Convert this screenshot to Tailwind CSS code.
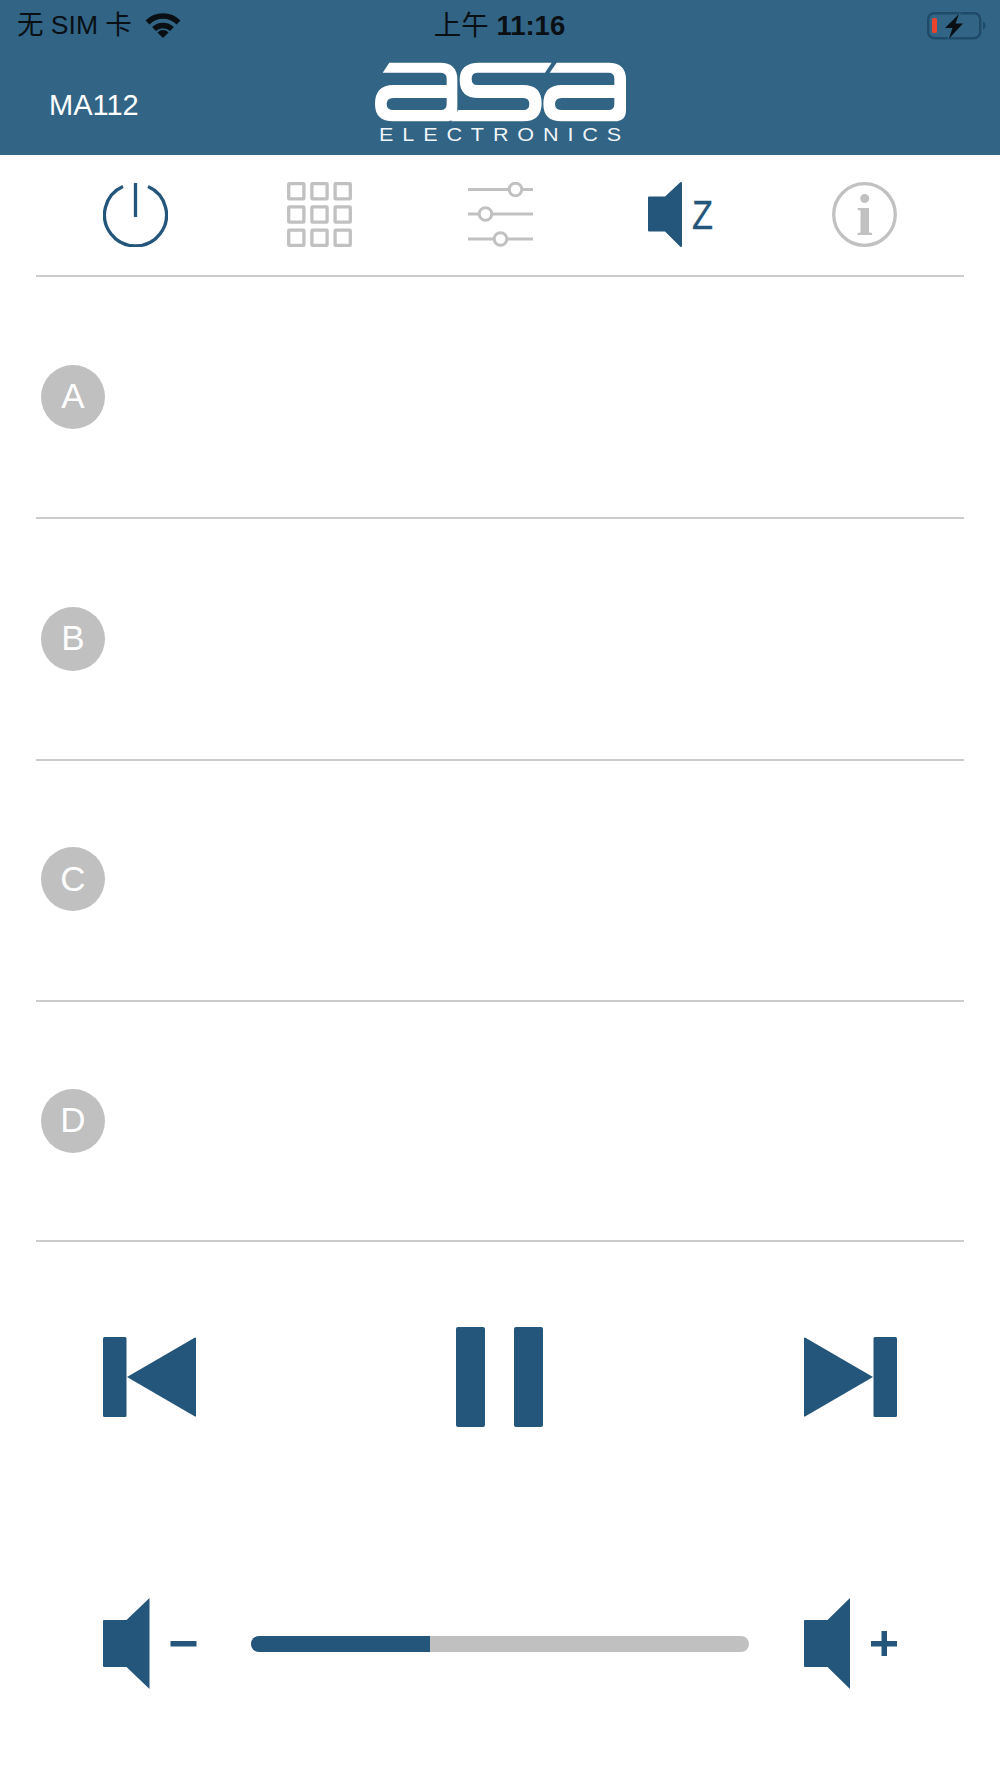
<!DOCTYPE html>
<html lang="zh">
<head>
  <meta charset="UTF-8" />
  <meta name="viewport" content="width=device-width, initial-scale=1.0" />
  <title>MA112</title>
  <script src="https://cdn.jsdelivr.net/npm/@tailwindcss/browser@4"></script>
</head>
<body class="bg-white font-['Liberation_Sans','Noto_Sans_CJK_SC',sans-serif] w-[1000px] h-[1778px] overflow-hidden">
  <!-- header -->
  <header class="bg-[#316485] h-[155px]">
    <div class="grid grid-cols-3 items-center h-[50px] pt-[1px] pl-[17px] pr-[13px] text-[#0a0f14]">
      <div class="flex items-center">
        <span class="text-[26.5px] whitespace-nowrap">无 SIM 卡</span>
        <svg class="ml-[13px] mb-[3px]" width="36" height="27" viewBox="0 0 36 27">
          <path d="M2.5 11.5A22 22 0 0 1 33.5 11.5" fill="none" stroke="#0a0f14" stroke-width="5.5" />
          <path d="M9 18A13 13 0 0 1 27 18" fill="none" stroke="#0a0f14" stroke-width="5.5" />
          <path d="M18 27L12.4 21.4A8 8 0 0 1 23.6 21.4Z" fill="#0a0f14" />
        </svg>
      </div>
      <div class="text-center text-[27.5px] whitespace-nowrap mr-[5px]">上午 <span class="font-semibold">11:16</span></div>
      <div class="flex justify-end">
        <svg width="60" height="28" viewBox="0 0 60 28">
          <rect x="1.2" y="1.2" width="52" height="25" rx="6" fill="none" stroke="#1f4a68" stroke-width="2.4" />
          <path d="M56 9.5C58 10.5 58.5 11.5 58.5 13.5C58.5 15.5 58 16.5 56 17.5Z" fill="#1f4a68" />
          <rect x="5" y="6" width="5" height="15" rx="1.5" fill="#e8442e" />
          <path d="M34 0L15 17H23L20 28L39 10H31Z" fill="#316485" />
          <path d="M32 2L18 16H25.5L22 26.5L36 11.5H28.5Z" fill="#0a0f14" />
        </svg>
      </div>
    </div>
    <div class="relative flex items-center h-[105px]">
      <span class="ml-[49px] mt-[7px] text-[29px] text-white">MA112</span>
      <div class="absolute left-[360px] top-0 w-[280px]">
        <svg class="block" width="280" height="72" viewBox="0 0 840 216" fill="#fff" fill-rule="evenodd">
          <path d="M88 38H240Q292 38 292 88V180Q292 214 258 214H100Q45 214 45 162Q45 105 100 105H260V85Q260 68 240 68H68ZM100 144Q80 144 80 162Q80 180 100 180H242Q260 180 260 162V144Z" />
          <path d="M358 38H575L555 68H352Q335 68 335 86Q335 105 352 105H490Q545 105 545 160Q545 214 490 214H273L295 180H490Q508 180 508 162Q508 144 490 144H355Q299 144 299 90Q299 38 358 38Z" />
          <path d="M590 38H745Q798 38 798 88V180Q798 214 764 214H605Q550 214 550 162Q550 105 605 105H763V85Q763 68 745 68H569ZM605 144Q585 144 585 162Q585 180 605 180H745Q763 180 763 162V144Z" />
        </svg>
        <div class="ml-[19px] mt-[4px] origin-left scale-x-[1.2] text-[18px] leading-[18px] tracking-[0.41em] text-white/95 whitespace-nowrap">ELECTRONICS</div>
      </div>
    </div>
  </header>

  <main class="mx-[36px]">
    <!-- top icon nav -->
    <nav class="flex h-[122px] pt-[27px] pl-[67px] border-b-2 border-[#cbcbcb]">
      <svg width="65" height="65" viewBox="0 0 65 65" fill="none" stroke="#23567a" stroke-width="3.3">
        <path d="M20 4.5A31 31 0 1 0 45 4.5" />
        <path d="M32.5 1V35" />
      </svg>
      <svg class="ml-[119px]" width="65" height="65" viewBox="0 0 65 65" fill="none" stroke="#c1c1c1" stroke-width="3.3">
        <rect x="1.7" y="1.7" width="15.2" height="15.2" rx="0.6" /><rect x="24.9" y="1.7" width="15.2" height="15.2" rx="0.6" /><rect x="48.1" y="1.7" width="15.2" height="15.2" rx="0.6" />
        <rect x="1.7" y="24.9" width="15.2" height="15.2" rx="0.6" /><rect x="24.9" y="24.9" width="15.2" height="15.2" rx="0.6" /><rect x="48.1" y="24.9" width="15.2" height="15.2" rx="0.6" />
        <rect x="1.7" y="48.1" width="15.2" height="15.2" rx="0.6" /><rect x="24.9" y="48.1" width="15.2" height="15.2" rx="0.6" /><rect x="48.1" y="48.1" width="15.2" height="15.2" rx="0.6" />
      </svg>
      <svg class="ml-[116px]" width="65" height="65" viewBox="0 0 65 65" fill="none" stroke="#c1c1c1" stroke-width="3">
        <path d="M0 7.5H41M54 7.5H65M0 32H11M24 32H65M0 57H26M39 57H65" />
        <circle cx="47.5" cy="7.5" r="6.3" /><circle cx="17.5" cy="32" r="6.3" /><circle cx="32.5" cy="57" r="6.3" />
      </svg>
      <svg class="ml-[114.7px] overflow-visible" width="68" height="65" viewBox="0 0 68 65">
        <path d="M1 15.5H17.5L33 1V64L17.5 48.5H1Z" fill="#23567a" stroke="#23567a" stroke-width="2" stroke-linejoin="round" />
        <text x="44" y="47" font-size="40" fill="#23567a" stroke="#23567a" stroke-width="0.3" textLength="21" lengthAdjust="spacingAndGlyphs">Z</text>
      </svg>
      <svg class="ml-[116.5px]" width="65" height="65" viewBox="0 0 65 65">
        <circle cx="32.5" cy="32.5" r="30.8" fill="none" stroke="#c1c1c1" stroke-width="3.3" />
        <text x="32.5" y="52.6" font-size="60" font-weight="700" text-anchor="middle" fill="#c1c1c1" font-family="Liberation Serif">i</text>
      </svg>
    </nav>

    <!-- zones -->
    <section class="flex items-center h-[242px] pl-[5px] pb-[1px] border-b-2 border-[#cbcbcb]">
      <div class="flex items-center justify-center w-[64px] h-[64px] rounded-full bg-[#c0c0c0] text-[35px] text-white">A</div>
    </section>
    <section class="flex items-center h-[242px] pl-[5px] pb-[1px] border-b-2 border-[#cbcbcb]">
      <div class="flex items-center justify-center w-[64px] h-[64px] rounded-full bg-[#c0c0c0] text-[35px] text-white">B</div>
    </section>
    <section class="flex items-center h-[241px] pl-[5px] pb-[3px] border-b-2 border-[#cbcbcb]">
      <div class="flex items-center justify-center w-[64px] h-[64px] rounded-full bg-[#c0c0c0] text-[35px] text-white">C</div>
    </section>
    <section class="flex items-center h-[240px] pl-[5px] pb-[1px] border-b-2 border-[#cbcbcb]">
      <div class="flex items-center justify-center w-[64px] h-[64px] rounded-full bg-[#c0c0c0] text-[35px] text-white">D</div>
    </section>
  </main>

  <!-- transport -->
  <div class="flex items-center justify-between mt-[85px] px-[103px]">
    <svg width="93" height="80" viewBox="0 0 93 80" fill="#23567a">
      <rect x="0" y="0" width="23.5" height="80" rx="1.5" />
      <path d="M24 40L92 0.5Q93 0 93 1.5V78.5Q93 80 92 79.5Z" />
    </svg>
    <div class="flex gap-[29px] mr-[2px]">
      <div class="w-[29px] h-[100px] rounded-[2px] bg-[#23567a]"></div>
      <div class="w-[29px] h-[100px] rounded-[2px] bg-[#23567a]"></div>
    </div>
    <svg width="93" height="80" viewBox="0 0 93 80" fill="#23567a">
      <rect x="69.5" y="0" width="23.5" height="80" rx="1.5" />
      <path d="M69 40L1 0.5Q0 0 0 1.5V78.5Q0 80 1 79.5Z" />
    </svg>
  </div>

  <!-- volume -->
  <div class="flex items-center mt-[171px] px-[103px]">
    <svg class="shrink-0" width="94" height="91" viewBox="0 0 94 91" fill="#23567a">
      <path d="M1 22H23.5L46.5 0V91L23.5 69H1Q0 69 0 68V23Q0 22 1 22Z" />
      <rect x="67.5" y="43" width="26" height="5.5" />
    </svg>
    <div class="flex shrink-0 w-[498px] h-[16px] ml-[54px] rounded-full overflow-hidden bg-[#c0c0c0]">
      <div class="w-[179px] bg-[#23567a]"></div>
    </div>
    <svg class="shrink-0 ml-[55px]" width="93" height="91" viewBox="0 0 93 91" fill="#23567a">
      <path d="M1 22H23.5L46 0V91L23.5 69H1Q0 69 0 68V23Q0 22 1 22Z" />
      <path d="M67 43H77.5V33H83V43H93V48.5H83V58H77.5V48.5H67Z" />
    </svg>
  </div>
</body>
</html>
